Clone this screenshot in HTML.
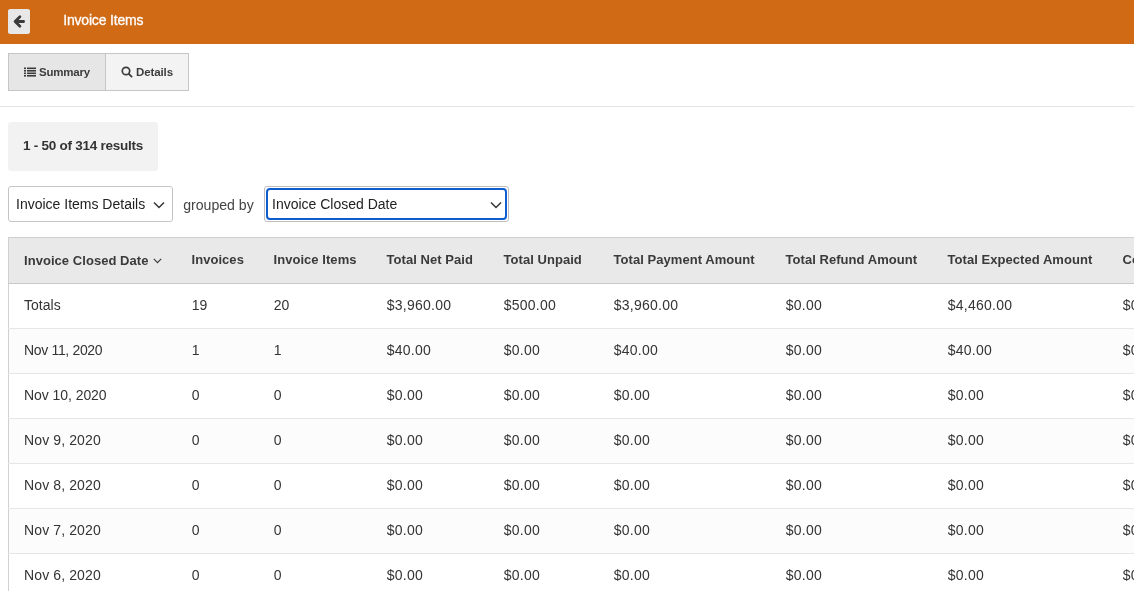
<!DOCTYPE html>
<html lang="en">
<head>
<meta charset="utf-8">
<title>Invoice Items</title>
<style>
*{box-sizing:border-box}
html,body{margin:0;padding:0}
body{width:1134px;height:591px;overflow:hidden;background:#fff;font-family:"Liberation Sans",Arial,sans-serif;color:#333;position:relative}
.hdr{position:absolute;left:0;top:0;width:1134px;height:44px;background:#d16a14}
.back{position:absolute;left:8px;top:9px;width:22px;height:25px;background:#e8e8e8;border-radius:3px;box-shadow:inset 0 0 0 1px #e5e7e9}
.back svg{position:absolute;left:0;top:0}
.title{position:absolute;left:63.2px;top:13px;font-size:14px;line-height:16px;color:#fff;letter-spacing:-0.18px;transform:translateY(-0.6px);-webkit-text-stroke:0.3px #fff}
.tabs{position:absolute;left:8px;top:53px;height:38px;display:flex;border:1px solid #c6c6c6}
.tab{height:36px;font-size:11.5px;font-weight:bold;color:#3c3c3c;display:flex;align-items:center;background:#f3f3f3;letter-spacing:-0.2px}
.tab.on{background:#e6e6e6;width:97px;padding-left:15px;border-right:1px solid #c6c6c6}
.tab.off{width:82px;padding-left:15px;letter-spacing:-0.1px}
.tab svg{margin-right:3px}
.hr{position:absolute;left:0;top:106px;width:1134px;height:1px;background:#e4e4e4}
.res{position:absolute;left:8px;top:122px;width:150px;height:49px;background:#f2f2f2;border-radius:3px;font-size:13.5px;font-weight:bold;line-height:48px;padding-left:15px;color:#333;letter-spacing:-0.25px}
.sel{position:absolute;top:186px;height:36px;border:1px solid #c4c4c4;border-radius:3px;background:#fff;font-size:14px;line-height:34px;color:#222}
.sel1{left:8px;width:165px;padding-left:7px}
.sel2{left:264px;width:245px;border-color:#bdbdbd}
.sel2 .ring{position:absolute;left:1px;top:1px;right:1px;bottom:1px;border:2px solid #0f5ccf;border-radius:4px;padding-left:4px;line-height:28px}
.sel svg{position:absolute;right:6.6px;top:14.3px}
.sel2 svg{right:3.4px;top:10.5px}
.gb{position:absolute;left:183.2px;top:197px;font-size:14.1px;line-height:16px;color:#444}
table{position:absolute;left:8px;top:237px;border-collapse:collapse;width:1300px;table-layout:fixed;border-left:1px solid #d0d0d0;border-top:1px solid #d0d0d0}
th{height:46px;background:#e9e9e9;text-align:left;font-size:13px;font-weight:bold;color:#3a3a3a;padding:0 0 0 15px;border-bottom:1px solid #c9c9c9;white-space:nowrap;letter-spacing:0.05px}
th span{position:relative;top:-1px}
td{height:45px;font-size:14px;color:#343434;padding:0 0 2px 15.2px;border-bottom:1px solid #e6e6e6;white-space:nowrap;letter-spacing:0.25px}
td:first-child{letter-spacing:0.12px;padding-left:15px}
td.c{letter-spacing:0}
tr.alt td{background:#fcfcfc}
td i{font-style:normal;display:inline-block;transform:translateY(0.4px)}
</style>
</head>
<body><div id="wrap" style="position:absolute;left:0;top:0;width:1134px;height:591px;will-change:transform">
<div class="hdr">
  <div class="back"><svg width="22" height="25" viewBox="8 9 22 25"><path d="M19.9 16.7 L15.1 21.5 L19.9 26.3 M15.6 21.5 H23.6" fill="none" stroke="#3a3a3a" stroke-width="2.8" stroke-linecap="round" stroke-linejoin="round"/></svg></div>
  <div class="title">Invoice Items</div>
</div>
<div class="tabs">
  <div class="tab on"><svg width="12" height="10" viewBox="0 0 12 10"><g fill="#3c3c3c"><rect x="0" y="0.5" width="2" height="1.6"/><rect x="3" y="0.5" width="9" height="1.6"/><rect x="0" y="3" width="2" height="1.6"/><rect x="3" y="3" width="9" height="1.6"/><rect x="0" y="5.5" width="2" height="1.6"/><rect x="3" y="5.5" width="9" height="1.6"/><rect x="0" y="8" width="2" height="1.6"/><rect x="3" y="8" width="9" height="1.6"/></g></svg>Summary</div>
  <div class="tab off"><svg width="12" height="12" viewBox="0 0 12 12" style="margin-top:-1px"><circle cx="5" cy="5" r="3.7" fill="none" stroke="#3c3c3c" stroke-width="1.7"/><path d="M7.8 7.8 L10.6 10.6" stroke="#3c3c3c" stroke-width="1.9" stroke-linecap="round"/></svg>Details</div>
</div>
<div class="hr"></div>
<div class="res">1 - 50 of 314 results</div>
<div class="sel sel1">Invoice Items Details<svg width="12" height="8" viewBox="0 0 12 8"><path d="M1 1.5 L6 6.5 L11 1.5" fill="none" stroke="#333" stroke-width="1.45"/></svg></div>
<div class="gb">grouped by</div>
<div class="sel sel2"><div class="ring">Invoice Closed Date<svg width="12" height="8" viewBox="0 0 12 8"><path d="M1 1.5 L6 6.5 L11 1.5" fill="none" stroke="#333" stroke-width="1.45"/></svg></div></div>
<table>
<colgroup><col style="width:168px"><col style="width:82px"><col style="width:113px"><col style="width:117px"><col style="width:110px"><col style="width:172px"><col style="width:162px"><col style="width:175px"><col style="width:202px"></colgroup>
<thead><tr><th>Invoice Closed Date <svg width="9" height="6" viewBox="0 0 9 6" style="vertical-align:1px;margin-left:1px"><path d="M0.8 0.9 L4.5 4.6 L8.2 0.9" fill="none" stroke="#3a3a3a" stroke-width="1.15"/></svg></th><th><span>Invoices</span></th><th><span>Invoice Items</span></th><th><span>Total Net Paid</span></th><th><span>Total Unpaid</span></th><th><span>Total Payment Amount</span></th><th><span>Total Refund Amount</span></th><th><span>Total Expected Amount</span></th><th><span>Commission</span></th></tr></thead>
<tbody>
<tr><td style="letter-spacing:0.02px"><i>Totals</i></td><td class="c"><i>19</i></td><td class="c"><i>20</i></td><td><i>$3,960.00</i></td><td><i>$500.00</i></td><td><i>$3,960.00</i></td><td><i>$0.00</i></td><td><i>$4,460.00</i></td><td><i>$0.00</i></td></tr>
<tr class="alt"><td style="letter-spacing:-0.33px"><i>Nov 11, 2020</i></td><td class="c"><i>1</i></td><td class="c"><i>1</i></td><td><i>$40.00</i></td><td><i>$0.00</i></td><td><i>$40.00</i></td><td><i>$0.00</i></td><td><i>$40.00</i></td><td><i>$0.00</i></td></tr>
<tr><td style="letter-spacing:-0.06px"><i>Nov 10, 2020</i></td><td class="c"><i>0</i></td><td class="c"><i>0</i></td><td><i>$0.00</i></td><td><i>$0.00</i></td><td><i>$0.00</i></td><td><i>$0.00</i></td><td><i>$0.00</i></td><td><i>$0.00</i></td></tr>
<tr class="alt"><td><i>Nov 9, 2020</i></td><td class="c"><i>0</i></td><td class="c"><i>0</i></td><td><i>$0.00</i></td><td><i>$0.00</i></td><td><i>$0.00</i></td><td><i>$0.00</i></td><td><i>$0.00</i></td><td><i>$0.00</i></td></tr>
<tr><td><i>Nov 8, 2020</i></td><td class="c"><i>0</i></td><td class="c"><i>0</i></td><td><i>$0.00</i></td><td><i>$0.00</i></td><td><i>$0.00</i></td><td><i>$0.00</i></td><td><i>$0.00</i></td><td><i>$0.00</i></td></tr>
<tr class="alt"><td><i>Nov 7, 2020</i></td><td class="c"><i>0</i></td><td class="c"><i>0</i></td><td><i>$0.00</i></td><td><i>$0.00</i></td><td><i>$0.00</i></td><td><i>$0.00</i></td><td><i>$0.00</i></td><td><i>$0.00</i></td></tr>
<tr><td><i>Nov 6, 2020</i></td><td class="c"><i>0</i></td><td class="c"><i>0</i></td><td><i>$0.00</i></td><td><i>$0.00</i></td><td><i>$0.00</i></td><td><i>$0.00</i></td><td><i>$0.00</i></td><td><i>$0.00</i></td></tr>
<tr class="alt"><td><i>Nov 5, 2020</i></td><td class="c"><i>0</i></td><td class="c"><i>0</i></td><td><i>$0.00</i></td><td><i>$0.00</i></td><td><i>$0.00</i></td><td><i>$0.00</i></td><td><i>$0.00</i></td><td><i>$0.00</i></td></tr>
</tbody>
</table>
</div></body>
</html>
